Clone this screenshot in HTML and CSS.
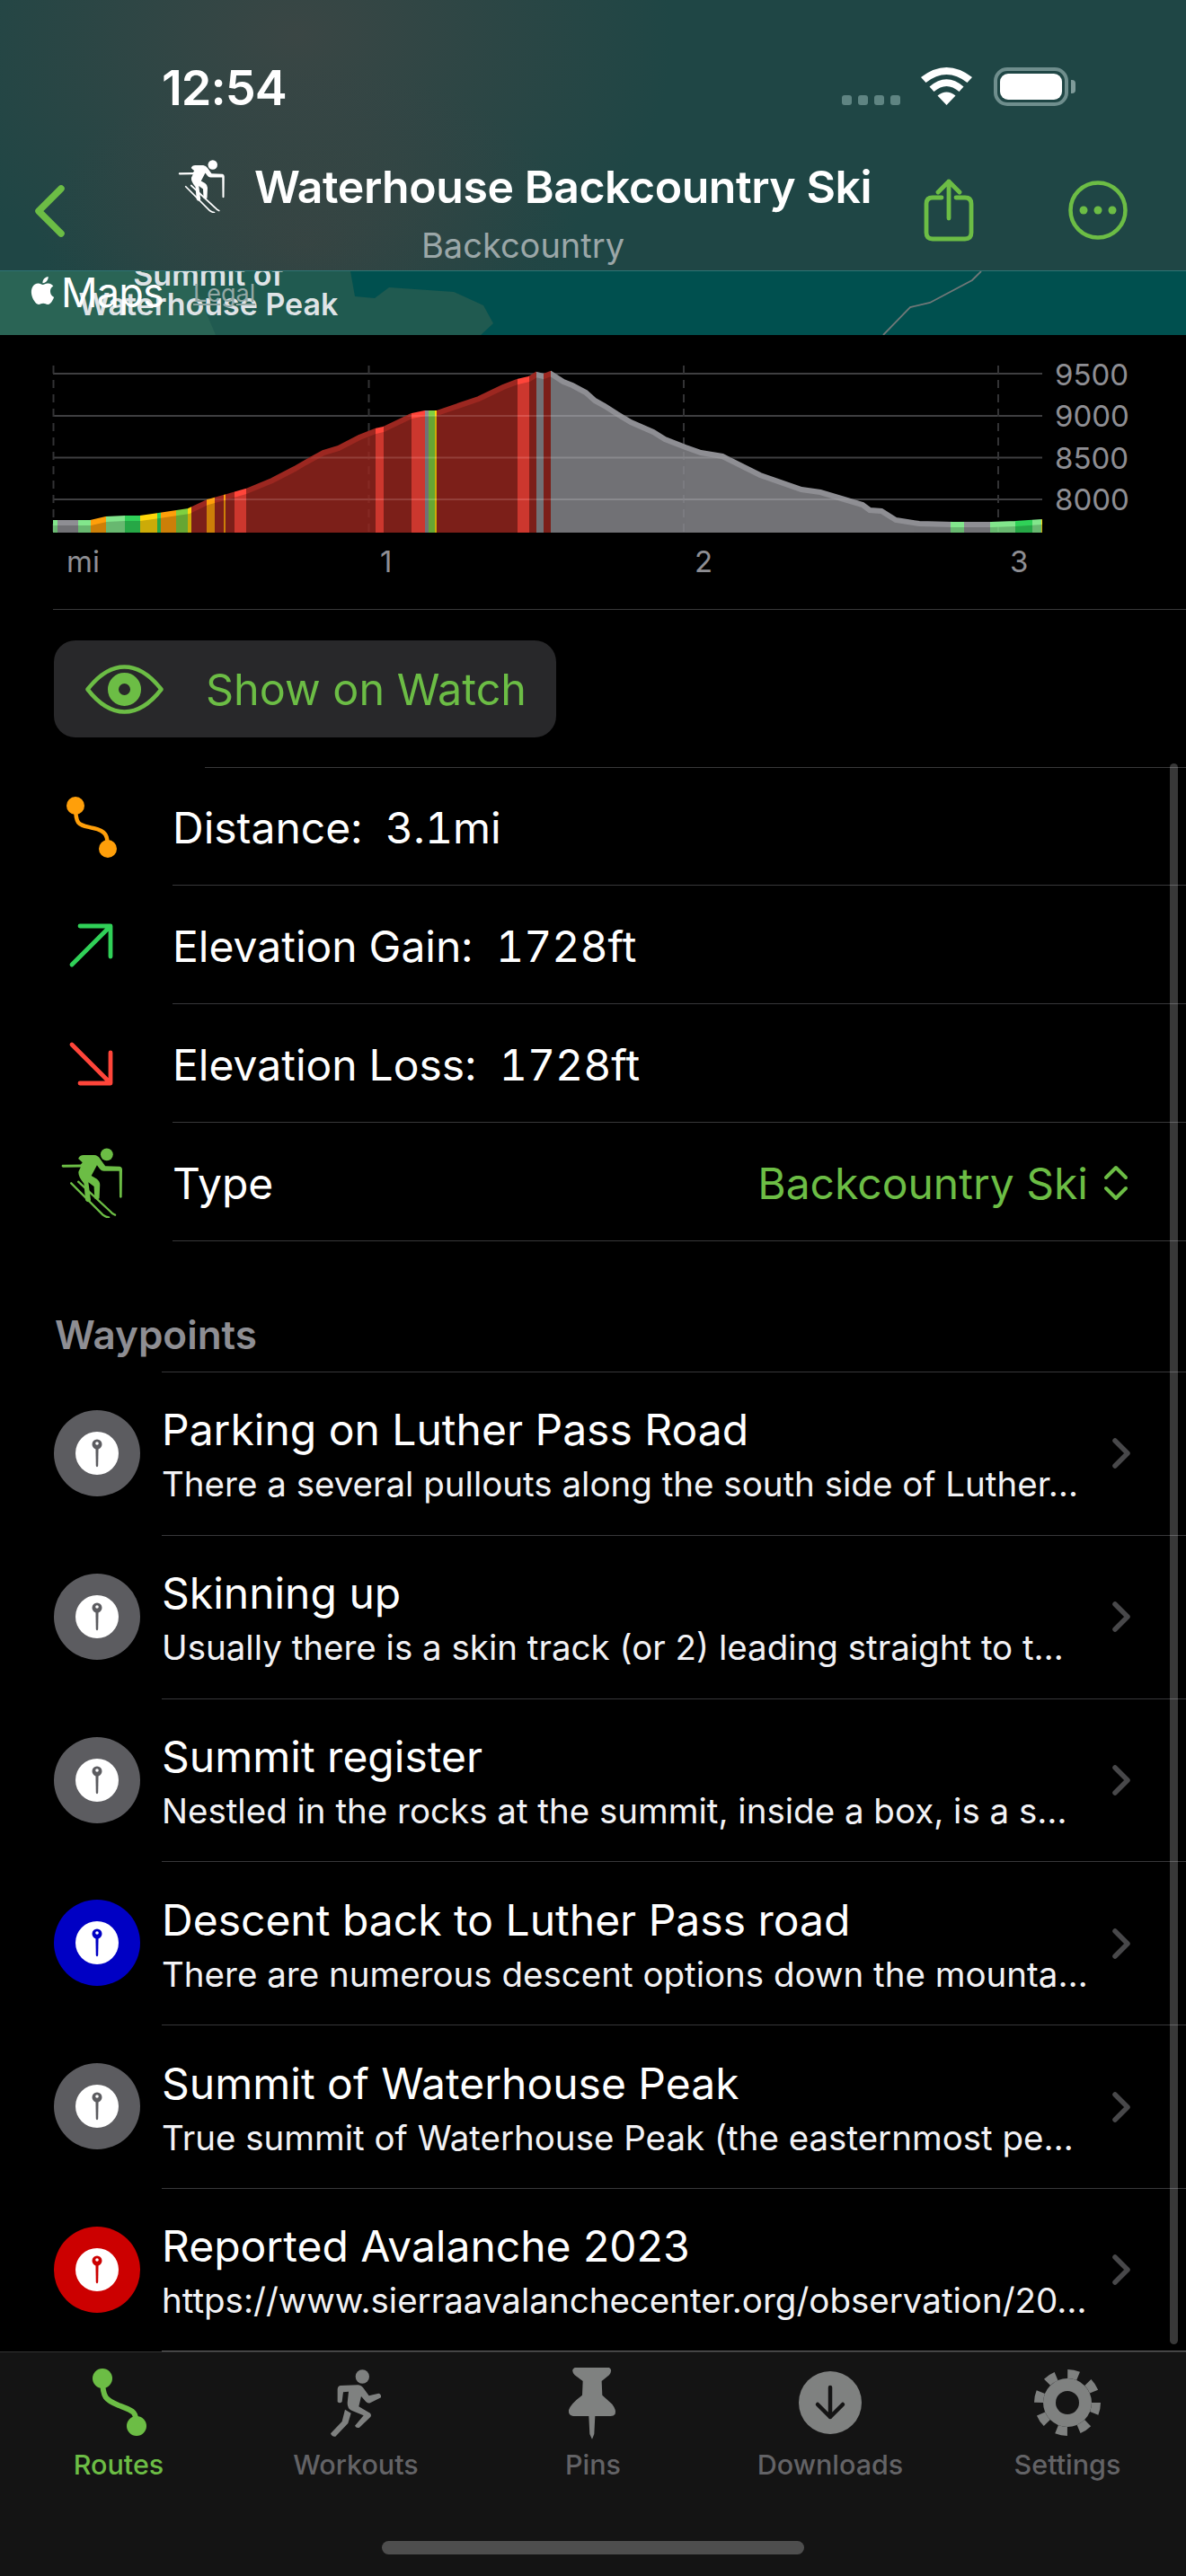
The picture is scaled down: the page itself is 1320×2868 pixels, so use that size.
FILE: index.html
```html
<!DOCTYPE html>
<html lang="en">
<head>
<meta charset="utf-8">
<title>Waterhouse Backcountry Ski</title>
<link rel="stylesheet" href="styles.css">
</head>
<body>
<svg class="defs" width="0" height="0" aria-hidden="true">
  <defs>
    <symbol id="ski" viewBox="84 56 206 236">
      <circle cx="238" cy="78" r="21"/>
      <path d="M142 92Q146 80 160 80L196 80Q208 81 215 92L233 117L282 119Q290 121 290 130L289 222Q285 228 281 222L280 134L228 134Q220 134 214 126L205 114L186 150L204 160Q215 168 215 180L213 226Q205 232 197 226L195 186L176 172L184 232Q175 245 166 232L161 176Q140 152 143 135L150 121L90 122Q83 118 88 113L150 112L156 105Z"/>
      <path d="M118 175L225 282Q236 290 245 290M142 170L250 270Q258 280 266 282" fill="none" stroke="currentColor" stroke-width="7" stroke-linecap="round"/>
    </symbol>
    <symbol id="wpin" viewBox="0 0 48 48">
      <circle cx="24" cy="14" r="5.5" fill="currentColor"/>
      <circle cx="24" cy="13" r="1.8" fill="#fff"/>
      <path d="M22.4 17H25.6L25.2 38Q24 40.500 22.800 38Z" fill="currentColor"/>
    </symbol>
    <symbol id="chev" viewBox="0 0 20 34">
      <path d="M3 3L17 17L3 31" fill="none" stroke="currentColor" stroke-width="5.500" stroke-linecap="round" stroke-linejoin="round"/>
    </symbol>
  </defs>
</svg>

<div class="screen">
  <header class="top">
    <div class="status">
      <span class="clock">12:54</span>
      <div class="status-icons">
        <div class="dots"><i></i><i></i><i></i><i></i></div>
        <svg class="wifi" viewBox="0 0 57 42"><path d="M28.500 42L18.500 31.500Q28.500 23.500 38.500 31.500ZM14.500 27L9.500 21.500Q28.500 5 47.500 21.500L42.500 27Q28.500 15 14.500 27ZM5.500 17L0 11Q28.500 -11 57 11L51.500 17Q28.500 -1 5.500 17Z" fill="#fff"/></svg>
        <div class="battery"><div class="battery-fill"></div></div>
        <div class="battery-nub"></div>
      </div>
    </div>
    <div class="nav">
      <svg class="back" viewBox="0 0 36 58"><path d="M30 4L5 29L30 54" fill="none" stroke="currentColor" stroke-width="7.500" stroke-linecap="round" stroke-linejoin="round"/></svg>
      <div class="title-col">
        <div class="title-row">
          <svg class="ski-head"><use href="#ski"/></svg>
          <h1 class="title">Waterhouse Backcountry Ski</h1>
        </div>
        <div class="subtitle">Backcountry</div>
      </div>
      <svg class="share" viewBox="0 0 56 71"><path d="M20 22H10Q3 22 3 29V61Q3 68 10 68H46Q53 68 53 61V29Q53 22 46 22H36M28 45V4M16 16L28 4L40 16" fill="none" stroke="currentColor" stroke-width="4.800" stroke-linecap="round" stroke-linejoin="round"/></svg>
      <svg class="more" viewBox="0 0 66 66"><circle cx="33" cy="33" r="30.500" fill="none" stroke="currentColor" stroke-width="4.500"/><circle cx="17" cy="33" r="4.500" fill="currentColor"/><circle cx="33" cy="33" r="4.500" fill="currentColor"/><circle cx="49" cy="33" r="4.500" fill="currentColor"/></svg>
    </div>
  </header>

  <div class="map">
    <svg class="map-art" viewBox="0 302 1320 71">
      <rect x="0" y="302" width="1320" height="71" fill="#00504f"/>
      <path d="M0 302H390L395 330L417 332L433 320L505 325L538 340L549 360L535 373H0Z" fill="#205a50"/>
      <path d="M0 302H210L240 373H0Z" fill="#2a6455"/>
      <path d="M1092 302L1082 312L1035 337L1013 342L983 373" fill="none" stroke="#707878" stroke-width="1.800"/>
    </svg>
    <div class="map-label">Summit of<br>Waterhouse Peak</div>
    <div class="map-brand">
      <svg class="apple" viewBox="0 0 24 24"><path fill="#fff" d="M12.152 6.896c-.948 0-2.415-1.078-3.96-1.04-2.04.027-3.91 1.183-4.961 3.014-2.117 3.675-.546 9.103 1.519 12.09 1.013 1.454 2.208 3.09 3.792 3.039 1.52-.065 2.09-.987 3.935-.987 1.831 0 2.35.987 3.96.948 1.637-.026 2.676-1.48 3.676-2.948 1.156-1.688 1.636-3.325 1.662-3.415-.039-.013-3.182-1.221-3.22-4.857-.026-3.04 2.48-4.494 2.597-4.559-1.429-2.09-3.623-2.324-4.39-2.376-2-.156-3.675 1.09-4.61 1.09zM15.53 3.83c.843-1.012 1.4-2.427 1.245-3.83-1.207.052-2.662.805-3.532 1.818-.78.896-1.454 2.338-1.273 3.714 1.338.104 2.715-.688 3.559-1.701"/></svg>
      <span class="maps-word">Maps</span>
      <span class="legal">Legal</span>
    </div>
  </div>

  <section class="chart">
    <svg class="chart-svg" viewBox="0 373 1320 305">
      <defs>
        <clipPath id="area"><polygon points="59,580 101,580 118,576 139,575 156,575 177,572 210,567 231,557 253,551 274,545 303,533 328,520 340,513 360,502 377,497 400,485 418,478 427,476 458,461 473,458 486,458 533,442 560,429 576,423 589,420 597,415 605,417 613,414 627,423 637,427 652,435 662,444 673,450 687,459 702,468 727,479 740,487 763,496 780,502 804,506 846,527 892,543 913,546 960,560 968,566 981,567 997,577 1023,581 1061,582 1103,582 1130,581 1160,579 1160,593 59,593"/></clipPath>
        <mask id="band" maskUnits="userSpaceOnUse" x="0" y="373" width="1320" height="305">
          <polyline fill="none" stroke="#fff" stroke-width="6" transform="translate(0 2)" points="59,580 101,580 118,576 139,575 156,575 177,572 210,567 231,557 253,551 274,545 303,533 328,520 340,513 360,502 377,497 400,485 418,478 427,476 458,461 473,458 486,458 533,442 560,429 576,423 589,420 597,415 605,417 613,414 627,423 637,427 652,435 662,444 673,450 687,459 702,468 727,479 740,487 763,496 780,502 804,506 846,527 892,543 913,546 960,560 968,566 981,567 997,577 1023,581 1061,582 1103,582 1130,581 1160,579"/>
        </mask>
        <g id="stripes">
          <rect class="s-gray" x="59" y="400" width="1101" height="200"/>
          <rect class="s-lgreen" x="59" y="400" width="5" height="200"/>
          <rect class="s-lgreen" x="87" y="400" width="14" height="200"/>
          <rect class="s-orange" x="101" y="400" width="17" height="200"/>
          <rect class="s-lgreen" x="118" y="400" width="21" height="200"/>
          <rect class="s-green" x="139" y="400" width="17" height="200"/>
          <rect class="s-yellow" x="156" y="400" width="19" height="200"/>
          <rect class="s-green" x="175" y="400" width="4" height="200"/>
          <rect class="s-orange" x="179" y="400" width="17" height="200"/>
          <rect class="s-olive" x="196" y="400" width="13" height="200"/>
          <rect class="s-yellow" x="209" y="400" width="4" height="200"/>
          <rect class="s-dark" x="213" y="400" width="400" height="200"/>
          <rect class="s-orange" x="230" y="400" width="9" height="200"/>
          <rect class="s-orange" x="249" y="400" width="2" height="200"/>
          <rect class="s-red" x="261" y="400" width="13" height="200"/>
          <rect class="s-red" x="418" y="400" width="9" height="200"/>
          <rect class="s-red" x="458" y="400" width="15" height="200"/>
          <rect class="s-gray" x="473" y="400" width="4" height="200"/>
          <rect class="s-olive" x="477" y="400" width="7" height="200"/>
          <rect class="s-yellow" x="484" y="400" width="2" height="200"/>
          <rect class="s-red" x="576" y="400" width="13" height="200"/>
          <rect class="s-gray" x="597" y="400" width="8" height="200"/>
          <rect class="s-lgreen" x="1058" y="400" width="15" height="200"/>
          <rect class="s-lgreen" x="1102" y="400" width="28" height="200"/>
          <rect class="s-green" x="1130" y="400" width="19" height="200"/>
          <rect class="s-lgreen" x="1149" y="400" width="10" height="200"/>
          <rect class="s-yellow" x="1159" y="400" width="1" height="200"/>
        </g>
      </defs>
      <g class="grid-h">
        <line x1="59" x2="1160" y1="416" y2="416"/><line x1="59" x2="1160" y1="463" y2="463"/><line x1="59" x2="1160" y1="509.500" y2="509.500"/><line x1="59" x2="1160" y1="556" y2="556"/>
      </g>
      <g class="grid-v">
        <line x1="59.500" x2="59.500" y1="407" y2="593"/><line x1="410.500" x2="410.500" y1="407" y2="593"/><line x1="761" x2="761" y1="407" y2="593"/><line x1="1111" x2="1111" y1="407" y2="593"/>
      </g>
      <g clip-path="url(#area)" opacity="0.8"><use href="#stripes"/></g>
      <g mask="url(#band)"><use href="#stripes"/></g>
      <g clip-path="url(#area)" class="grid-over">
        <line x1="59" x2="1160" y1="463" y2="463"/><line x1="59" x2="1160" y1="509.500" y2="509.500"/><line x1="59" x2="1160" y1="556" y2="556"/>
      </g>
      <text class="axis" x="1174" y="429">9500</text>
      <text class="axis" x="1174" y="475">9000</text>
      <text class="axis" x="1174" y="522">8500</text>
      <text class="axis" x="1174" y="568">8000</text>
      <text class="axis" x="74" y="637">mi</text>
      <text class="axis" x="423" y="637">1</text>
      <text class="axis" x="773" y="637">2</text>
      <text class="axis" x="1124" y="637">3</text>
    </svg>
  </section>
  <div class="rule rule-chart"></div>

  <div class="watch-wrap">
    <button class="watch-btn" type="button">
      <svg class="eye" viewBox="0 0 87 55"><path d="M2.500 27.500Q22 2.500 43.500 2.500T84.500 27.500Q65 52.500 43.500 52.500T2.500 27.500Z" fill="none" stroke="currentColor" stroke-width="4.500" stroke-linejoin="round"/><circle cx="43.500" cy="27.500" r="12.500" fill="none" stroke="currentColor" stroke-width="12"/></svg>
      <span>Show on Watch</span>
    </button>
  </div>

  <div class="rule rule-stats"></div>
  <div class="stats">
    <div class="stat stat-first">
      <svg class="stat-icon" viewBox="0 0 192 132"><path d="M84 43C84 66 88 64 104 68C118 71 120 76 120 91" fill="none" stroke="#ff9f0a" stroke-width="4.500"/><circle cx="84" cy="43" r="10" fill="#ff9f0a"/><circle cx="120" cy="91" r="10" fill="#ff9f0a"/></svg>
      <div class="stat-body"><span class="stat-text">Distance:  3.1mi</span></div>
    </div>
    <div class="stat">
      <svg class="stat-icon" viewBox="0 0 192 132"><path d="M80 88L122 46M89 45H123V79" fill="none" stroke="#30d158" stroke-width="4.800" stroke-linecap="round" stroke-linejoin="round"/></svg>
      <div class="stat-body"><span class="stat-text">Elevation Gain:  1728ft</span></div>
    </div>
    <div class="stat">
      <svg class="stat-icon" viewBox="0 0 192 132"><path d="M80 45L122 87M89 88H123V54" fill="none" stroke="#ff453a" stroke-width="4.800" stroke-linecap="round" stroke-linejoin="round"/></svg>
      <div class="stat-body"><span class="stat-text">Elevation Loss:  1728ft</span></div>
    </div>
    <div class="stat stat-last">
      <div class="stat-ski"><svg class="ski-green"><use href="#ski"/></svg></div>
      <div class="stat-body">
        <span class="stat-text">Type</span>
        <span class="type-value">Backcountry Ski</span>
        <svg class="updown" viewBox="0 0 28 40"><path d="M3 14L14 3L25 14M3 26L14 37L25 26" fill="none" stroke="currentColor" stroke-width="4" stroke-linecap="round" stroke-linejoin="round"/></svg>
      </div>
    </div>
  </div>

  <h2 class="wp-head">Waypoints</h2>

  <ul class="wp-list">
    <li class="wp">
      <div class="wp-cell"><div class="wp-dot dot-gray"><div class="wp-core"><svg class="wp-pin"><use href="#wpin"/></svg></div></div></div>
      <div class="wp-body"><div class="wp-text"><div class="wp-title">Parking on Luther Pass Road</div><div class="wp-sub">There a several pullouts along the south side of Luther…</div></div><svg class="wp-chev"><use href="#chev"/></svg></div>
    </li>
    <li class="wp">
      <div class="wp-cell"><div class="wp-dot dot-gray"><div class="wp-core"><svg class="wp-pin"><use href="#wpin"/></svg></div></div></div>
      <div class="wp-body"><div class="wp-text"><div class="wp-title">Skinning up</div><div class="wp-sub">Usually there is a skin track (or 2) leading straight to t…</div></div><svg class="wp-chev"><use href="#chev"/></svg></div>
    </li>
    <li class="wp">
      <div class="wp-cell"><div class="wp-dot dot-gray"><div class="wp-core"><svg class="wp-pin"><use href="#wpin"/></svg></div></div></div>
      <div class="wp-body"><div class="wp-text"><div class="wp-title">Summit register</div><div class="wp-sub">Nestled in the rocks at the summit, inside a box, is a s…</div></div><svg class="wp-chev"><use href="#chev"/></svg></div>
    </li>
    <li class="wp">
      <div class="wp-cell"><div class="wp-dot dot-blue"><div class="wp-core"><svg class="wp-pin"><use href="#wpin"/></svg></div></div></div>
      <div class="wp-body"><div class="wp-text"><div class="wp-title">Descent back to Luther Pass road</div><div class="wp-sub">There are numerous descent options down the mounta…</div></div><svg class="wp-chev"><use href="#chev"/></svg></div>
    </li>
    <li class="wp">
      <div class="wp-cell"><div class="wp-dot dot-gray"><div class="wp-core"><svg class="wp-pin"><use href="#wpin"/></svg></div></div></div>
      <div class="wp-body"><div class="wp-text"><div class="wp-title">Summit of Waterhouse Peak</div><div class="wp-sub">True summit of Waterhouse Peak (the easternmost pe…</div></div><svg class="wp-chev"><use href="#chev"/></svg></div>
    </li>
    <li class="wp">
      <div class="wp-cell"><div class="wp-dot dot-red"><div class="wp-core"><svg class="wp-pin"><use href="#wpin"/></svg></div></div></div>
      <div class="wp-body"><div class="wp-text"><div class="wp-title">Reported Avalanche 2023</div><div class="wp-sub">https://www.sierraavalanchecenter.org/observation/20…</div></div><svg class="wp-chev"><use href="#chev"/></svg></div>
    </li>
  </ul>

  <nav class="tabs">
    <div class="tab tab-active">
      <svg class="tab-icon" viewBox="0 0 80 80"><path d="M22 12C22 34 26 36 40 42C56 48 60 48 60 65" fill="none" stroke="currentColor" stroke-width="6"/><circle cx="22" cy="12" r="11" fill="currentColor"/><circle cx="60" cy="65" r="11" fill="currentColor"/></svg>
      <span class="tab-label">Routes</span>
    </div>
    <div class="tab">
      <svg class="tab-icon" viewBox="0 0 80 80"><g transform="translate(12 2) scale(.3333) translate(-80 -38)"><circle cx="186" cy="62" r="23" fill="currentColor"/><path fill="currentColor" d="M112 92L172 90Q185 92 192 104L208 126L240 118Q250 120 248 132L212 150Q205 152 198 146L182 128L174 162L212 184Q218 192 212 198L176 232Q166 236 161 226L190 192L150 175Q136 170 136 150L140 112L122 114L118 146Q110 154 103 146L103 104Q104 94 112 92Z"/><path fill="currentColor" d="M128 172L148 184L138 218L96 262Q84 264 80 252L118 212Z"/></g></svg>
      <span class="tab-label">Workouts</span>
    </div>
    <div class="tab">
      <svg class="tab-icon" viewBox="0 0 80 80"><g transform="translate(13 0) scale(.3333) translate(-880 -33)"><path fill="currentColor" d="M900 33L1015 33Q1028 40 1015 58L990 78L992 125L1025 155Q1040 175 1035 188Q1030 195 1020 195L968 195L965 255L958 272L950 255L947 195L895 195Q878 193 880 175Q885 155 925 125L927 78L900 58Q885 40 900 33Z"/></g></svg>
      <span class="tab-label">Pins</span>
    </div>
    <div class="tab">
      <svg class="tab-icon" viewBox="0 0 80 80"><circle cx="40" cy="39" r="35" fill="currentColor"/><path d="M40 22V55M26 41L40 55L54 41" fill="none" stroke="#141414" stroke-width="4.500" stroke-linecap="round" stroke-linejoin="round"/></svg>
      <span class="tab-label">Downloads</span>
    </div>
    <div class="tab">
      <svg class="tab-icon" viewBox="0 0 80 80"><circle cx="40" cy="39" r="27" fill="currentColor"/><circle cx="40" cy="39" r="32" fill="none" stroke="currentColor" stroke-width="10" stroke-dasharray="12.130 13"/><circle cx="40" cy="39" r="13" fill="#141414"/></svg>
      <span class="tab-label">Settings</span>
    </div>
    <div class="home-bar"></div>
  </nav>

  <div class="scroll-thumb"></div>
</div>
</body>
</html>
```
FILE: styles.css
```css
* { box-sizing: border-box; }
html, body { margin: 0; padding: 0; background: #000; }
.defs { position: absolute; }
.screen {
  position: relative;
  width: 1320px;
  height: 2868px;
  overflow: hidden;
  display: flex;
  flex-direction: column;
  background: #000;
  color: #fff;
  font-family: Inter, "Liberation Sans", sans-serif;
}

/* header */
.top {
  height: 302px;
  flex: none;
  background:
    radial-gradient(ellipse 420px 320px at 330px 40px, rgba(70,70,68,.7), rgba(70,70,68,0)),
    radial-gradient(ellipse 300px 200px at 340px 270px, rgba(66,66,64,.55), rgba(66,66,64,0)),
    #1f4645;
  position: relative;
  z-index: 2;
  border-bottom: 1px solid #2f7474;
}
.status { height: 150px; display: flex; position: relative; }
.clock {
  margin: 67px 0 0 180px;
  font-size: 54px;
  line-height: 62px;
  font-weight: 600;
  letter-spacing: -1px;
  height: 62px;
}
.status-icons { position: absolute; left: 937px; top: 75px; display: flex; align-items: flex-start; }
.dots { display: flex; gap: 7px; margin-top: 31px; }
.dots i { width: 11px; height: 11px; border-radius: 3px; background: #5f8482; display: block; }
.wifi { width: 57px; height: 42px; margin-left: 23px; }
.battery {
  width: 83px; height: 43px; margin-left: 24px;
  border: 4px solid #6f8e8d; border-radius: 15px; padding: 3px;
}
.battery-fill { width: 100%; height: 100%; background: #fff; border-radius: 9px; }
.battery-nub { width: 5px; height: 15px; margin: 14px 0 0 3px; background: #7f9b9a; border-radius: 0 4px 4px 0; }

.nav { height: 152px; display: flex; align-items: flex-start; color: #6cbd45; position: relative; }
.back { width: 36px; height: 58px; margin: 56px 0 0 38px; flex: none; }
.title-col { margin-left: 124px; width: 768px; flex: none; }
.title-row { display: flex; align-items: flex-start; padding-top: 28px; height: 91px; }
.ski-head { width: 52px; height: 59px; color: #fff; fill: #fff; flex: none; }
.title {
  margin: 0 0 0 33px;
  font-size: 50px;
  line-height: 60px;
  font-weight: 600;
  color: #fff;
  white-space: nowrap;
  letter-spacing: -0.45px;
}
.subtitle { text-align: center; font-size: 38px; line-height: 48px; color: #9ba7a8; margin-top: 8px; }
.share { width: 56px; height: 71px; margin: 48px 0 0 62px; flex: none; }
.more { width: 66px; height: 66px; margin: 51px 0 0 105px; flex: none; }

/* map */
.map { height: 71px; flex: none; position: relative; overflow: hidden; }
.map-art { display: block; width: 1320px; height: 71px; }
.map-label {
  position: absolute; left: 82px; top: -13px; width: 300px;
  text-align: center; font-size: 34px; line-height: 33px; font-weight: 600;
  color: #dfe3e6;
}
.map-brand { position: absolute; left: 32px; top: 3px; display: flex; align-items: flex-start; }
.apple { width: 31px; height: 37px; flex: none; }
.maps-word { font-size: 45px; line-height: 48px; font-weight: 400; color: #fff; margin: -3px 0 0 5px; letter-spacing: -.8px; }
.legal { font-size: 27px; line-height: 30px; color: #93a8a5; margin: 7px 0 0 33px; text-decoration: underline; }

/* chart */
.chart { height: 305px; flex: none; }
.chart-svg { display: block; width: 1320px; height: 305px; }
.grid-h line { stroke: #3f3f41; stroke-width: 2; }
.grid-v line { stroke: #333335; stroke-width: 2; stroke-dasharray: 9 7; }
.grid-over line { stroke: rgba(255,255,255,.09); stroke-width: 2; }
.axis { font-size: 33px; fill: #8e8e93; font-family: Inter, "Liberation Sans", sans-serif; }
.s-gray { fill: #8e8e93; }
.s-lgreen { fill: #82e68c; }
.s-green { fill: #30d158; }
.s-orange { fill: #ff9f0a; }
.s-yellow { fill: #ffd60a; }
.s-olive { fill: #80d040; }
.s-dark { fill: #9c2720; }
.s-red { fill: #ff453a; }

.rule { height: 1px; flex: none; background: #38383a; }
.rule-chart { margin-left: 59px; }
.rule-stats { margin-left: 228px; }

/* watch button */
.watch-wrap { height: 175px; flex: none; padding: 34px 0 0 60px; }
.watch-btn {
  display: flex; align-items: center;
  width: 559px; height: 108px;
  padding: 0 0 0 35px;
  border: 0; border-radius: 24px;
  background: #28282a;
  color: #6cbd45;
  font: inherit;
  font-size: 48.500px;
  letter-spacing: 0;
}
.eye { width: 87px; height: 55px; flex: none; margin-right: 47px; }

/* stats */
.stats { flex: none; }
.stat { display: flex; height: 132px; }
.stat-first { height: 131px; }
.stat-icon { width: 192px; height: 132px; flex: none; display: block; }
.stat-first .stat-icon { margin-top: -1px; }
.stat-ski { width: 192px; flex: none; padding: 28px 0 0 68px; }
.ski-green { width: 68px; height: 78px; color: #6cbd45; fill: #6cbd45; display: block; }
.stat-body {
  flex: 1;
  display: flex; align-items: center;
  border-bottom: 1px solid #38383a;
  padding: 3px 64px 0 0;
}
.stat-text { font-size: 48px; white-space: pre; flex: 1; font-variant-numeric: tabular-nums; }
.type-value { font-size: 48px; color: #6cbd45; white-space: nowrap; }
.updown { width: 28px; height: 40px; color: #6cbd45; margin-left: 17px; flex: none; }

/* waypoints */
.wp-head {
  height: 145px; flex: none; margin: 0;
  padding: 77px 0 0 61px;
  font-size: 44px; line-height: 54px; font-weight: 600; color: #8e8e93;
}
.wp-list { list-style: none; margin: 0; padding: 0; flex: 1; display: flex; flex-direction: column; min-height: 0; }
.wp { display: flex; flex: 1 1 0; min-height: 0; }
.wp-cell { width: 180px; flex: none; padding: 43px 0 0 60px; }
.wp-dot { width: 96px; height: 96px; border-radius: 50%; display: flex; align-items: center; justify-content: center; }
.dot-gray { background: #5c5c60; color: #5c5c60; }
.dot-blue { background: #0000c4; color: #0000c4; }
.dot-red { background: #cc0000; color: #cc0000; }
.wp-core { width: 48px; height: 48px; border-radius: 50%; background: #fff; }
.wp-pin { display: block; width: 48px; height: 48px; }
.wp-body {
  flex: 1; min-width: 0;
  display: flex; align-items: center;
  border-top: 1px solid #38383a;
  padding-right: 62px;
}
.wp:last-child .wp-body { border-bottom: 1px solid #5a5a5c; }
.wp-text { flex: 1; min-width: 0; margin-top: 2px; }
.wp-title { font-size: 48px; line-height: 62px; white-space: nowrap; }
.wp-sub { font-size: 38.500px; line-height: 50px; white-space: nowrap; color: #f2f2f5; margin-top: 4px; }
.wp-chev { width: 20px; height: 34px; color: #48484a; flex: none; }

/* tabs */
.tabs {
  height: 250px; flex: none;
  background: #141414;
  border-top: 1px solid #333;
  display: flex;
  position: relative;
  padding-top: 17px;
}
.tab { width: 264px; display: flex; flex-direction: column; align-items: center; color: #7f8180; }
.tab-active { color: #6cbd45; }
.tab-icon { width: 80px; height: 80px; display: block; flex: none; }
.tab-label { font-size: 30.500px; line-height: 34px; margin-top: 11px; color: #636366; font-weight: 500; }
.tab-active .tab-label { color: #6cbd45; }
.home-bar {
  position: absolute; left: 425px; top: 210px;
  width: 470px; height: 15px; border-radius: 8px; background: #4e4e4e;
}

.scroll-thumb {
  position: absolute; left: 1302px; top: 850px;
  width: 9px; height: 1760px; border-radius: 5px;
  background: rgba(255,255,255,.22);
}
```
